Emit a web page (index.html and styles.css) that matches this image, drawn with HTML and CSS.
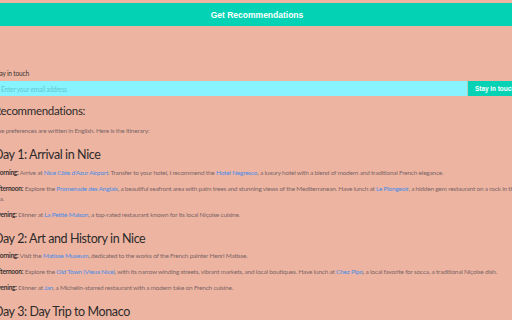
FILE: index.html
```html
<!DOCTYPE html>
<html>
<head>
<meta charset="utf-8">
<link rel="stylesheet" href="styles.css">
</head>
<body>
<div class="topbar"><button class="get-btn">Get Recommendations</button></div>
<div class="page">
  <div class="subscribe">
    <label class="sub-label">Stay in touch</label>
    <div class="sub-row">
      <input class="sub-input" type="text" placeholder="Enter your email address">
      <button class="sub-btn">Stay in touch</button>
    </div>
  </div>
  <h2 class="rec-title">Recommendations:</h2>
  <p class="intro">The preferences are written in English. Here is the itinerary:</p>

  <h3 class="day">Day 1: Arrival in Nice</h3>
  <p class="item"><b>Morning:</b> Arrive at <a>Nice Côte d'Azur Airport</a>. Transfer to your hotel, I recommend the <a>Hotel Negresco</a>, a luxury hotel with a blend of modern and traditional French elegance.</p>
  <p class="item"><b>Afternoon:</b> Explore the <a>Promenade des Anglais</a>, a beautiful seafront area with palm trees and stunning views of the Mediterranean. Have lunch at <a>Le Plongeoir</a>, a hidden gem restaurant on a rock in the sea.</p>
  <p class="item"><b>Evening:</b> Dinner at <a>La Petite Maison</a>, a top-rated restaurant known for its local Niçoise cuisine.</p>

  <h3 class="day">Day 2: Art and History in Nice</h3>
  <p class="item"><b>Morning:</b> Visit the <a>Matisse Museum</a>, dedicated to the works of the French painter Henri Matisse.</p>
  <p class="item"><b>Afternoon:</b> Explore the <a>Old Town (Vieux Nice)</a>, with its narrow winding streets, vibrant markets, and local boutiques. Have lunch at <a>Chez Pipo</a>, a local favorite for socca, a traditional Niçoise dish.</p>
  <p class="item"><b>Evening:</b> Dinner at <a>Jan</a>, a Michelin-starred restaurant with a modern take on French cuisine.</p>

  <h3 class="day">Day 3: Day Trip to Monaco</h3>
  <p class="item"><b>Morning:</b> Take a train to Monaco and visit the Prince's Palace.</p>
</div>
</body>
</html>
```
FILE: styles.css
```css
html, body {
  margin: 0;
  padding: 0;
  overflow: hidden;
  background: #edb5a1;
}
body {
  font-family: "Lato", "Liberation Sans", sans-serif;
  color: #7d6668;
  width: 512px;
  height: 320px;
}
.topbar {
  padding-top: 3px;
}
.get-btn {
  display: block;
  width: 100%;
  height: 23px;
  border: 0;
  margin: 0;
  background: #03d3b4;
  color: #fff;
  font-family: "Liberation Sans", Arial, sans-serif;
  font-weight: bold;
  font-size: 8.5px;
  padding: 0 0 0 2px;
}
.page {
  margin-left: -6px;
  width: 526px;
}
.subscribe {
  padding-top: 42px;
}
.sub-label {
  display: block;
  font-size: 6.6px;
  letter-spacing: -0.2px;
  line-height: 10px;
  color: #3a3234;
  margin-bottom: 3px;
}
.sub-row {
  display: flex;
  width: 540px;
}
.sub-input {
  flex: 1;
  height: 15px;
  box-sizing: border-box;
  border: 0;
  border-right: 1px solid #b9c9c4;
  background: #86f3ff;
  padding: 0 7px;
  margin: 0;
  font-family: "Lato", sans-serif;
  font-size: 6.6px;
  letter-spacing: -0.2px;
  outline: none;
}
.sub-input::placeholder {
  color: #5fc9cf;
}
.sub-btn {
  width: 66px;
  height: 15px;
  border: 0;
  margin: 0;
  background: #03d3b4;
  color: #fff;
  font-family: "Liberation Sans", Arial, sans-serif;
  font-weight: bold;
  font-size: 6.4px;
  text-align: left;
  padding: 0 7px;
}
.rec-title {
  font-size: 11.5px;
  letter-spacing: -0.3px;
  font-weight: normal;
  color: #2e2a2b;
  line-height: 15px;
  margin: 6.5px 0 0;
}
.intro {
  font-size: 6.5px;
  letter-spacing: -0.22px;
  line-height: 10px;
  margin: 8.5px 0 0;
}
.day {
  font-size: 12.5px;
  letter-spacing: -0.4px;
  font-weight: normal;
  color: #2e2a2b;
  line-height: 16px;
  margin: 11px 0 0;
}
.item {
  font-size: 6.5px;
  letter-spacing: -0.22px;
  line-height: 10px;
  margin: 6px 0 0;
}
.item b {
  color: #3a3234;
  font-weight: bold;
}
.item a {
  color: #4a8be6;
}
.day + .item {
  margin-top: 4.5px;
}
```
